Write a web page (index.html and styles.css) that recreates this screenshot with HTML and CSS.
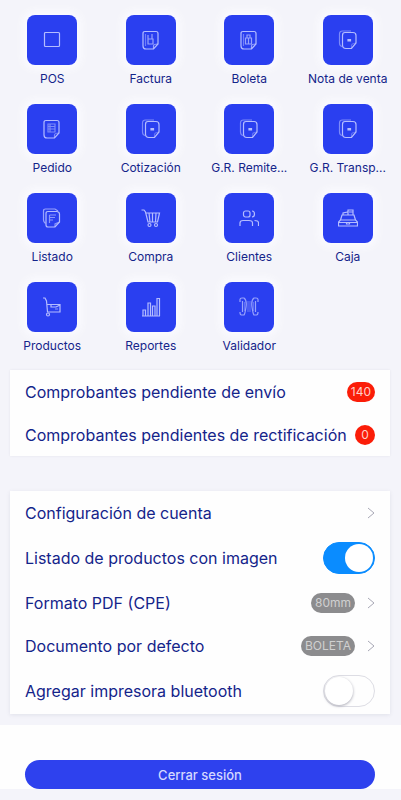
FILE: index.html
```html
<!DOCTYPE html>
<html lang="es">
<head>
<meta charset="utf-8">
<meta name="viewport" content="width=device-width, initial-scale=1">
<title>Menú</title>
<link rel="stylesheet" href="styles.css">
</head>
<body>
<svg class="symbols" aria-hidden="true">
  <symbol id="stack" viewBox="0 0 20 20">
    <path d="M4 16.500Q1.500 16 1.500 13V4Q1.500 1 4.500 1H13" opacity=".6"/>
    <path d="M7 2.500H15Q18 2.500 18 5.500V13L13.500 18.500H8Q4.500 18.500 4.500 15V5.500Q4.500 2.500 7 2.500Z"/>
    <path d="M13.500 18.500V15.500Q13.500 13.500 18 13" opacity=".4"/>
    <path d="M10 9.500H12.500V11H10Z" fill="currentColor"/>
  </symbol>
  <symbol id="chevron" viewBox="0 0 8 12"><path d="M1 1L7 6L1 11"/></symbol>
</svg>
<main>
  <nav class="apps" aria-label="Módulos">
    <a class="app" href="#"><span class="tile"><svg viewBox="0 0 20 20"><rect x="2.500" y="2.500" width="15" height="14" rx="1"/></svg></span>POS</a>
    <a class="app" href="#"><span class="tile"><svg viewBox="0 0 20 20"><path d="M4 1.500H15Q17 1.500 17 3.500V14L12.500 19H5Q2 19 2 16V3.500Q2 1.500 4 1.500Z"/><path d="M12.500 19V16Q12.500 14 17 14M7 5V14H12V9H7M11 4V9" opacity=".8"/><path d="M4.500 4V16" opacity=".5"/></svg></span>Factura</a>
    <a class="app" href="#"><span class="tile"><svg viewBox="0 0 20 20"><path d="M4 1.500H15Q17 1.500 17 3.500V14L12.500 19H5Q2 19 2 16V3.500Q2 1.500 4 1.500Z"/><path d="M12.500 19V16Q12.500 14 17 14M6.500 8H12.500V14H6.500ZM8 8V5H11V8M9.500 8V14" opacity=".8"/><path d="M4.500 4V16" opacity=".5"/></svg></span>Boleta</a>
    <a class="app" href="#"><span class="tile"><svg><use href="#stack"/></svg></span>Nota de venta</a>
    <a class="app" href="#"><span class="tile"><svg viewBox="0 0 20 20"><path d="M4 1.500H15Q17 1.500 17 3.500V14L12.500 19H5Q2 19 2 16V3.500Q2 1.500 4 1.500Z"/><path d="M12.500 19V16Q12.500 14 17 14M6 5H13V13H6ZM6 7.500H13M6 10H13M8 5V13" opacity=".6"/></svg></span>Pedido</a>
    <a class="app" href="#"><span class="tile"><svg><use href="#stack"/></svg></span>Cotización</a>
    <a class="app" href="#"><span class="tile"><svg><use href="#stack"/></svg></span>G.R. Remite...</a>
    <a class="app" href="#"><span class="tile"><svg><use href="#stack"/></svg></span>G.R. Transp...</a>
    <a class="app" href="#"><span class="tile"><svg viewBox="0 0 20 20"><path d="M3.500 15.500Q1.500 14 1.500 12V3Q1.500 1 3.500 1H13L16 3" opacity=".8"/><path d="M6 3.500H15Q17.500 4 17.500 6V14L13 19H6Q4 19 4 17V5.500Q4 3.500 6 3.500Z"/><path d="M13 19V16L17.500 14M7.500 7H14M7.500 9.500H13M7.500 12H11M7.500 7V15" opacity=".7"/></svg></span>Listado</a>
    <a class="app" href="#"><span class="tile"><svg viewBox="0 0 20 20"><path d="M.5 2H3L4.500 4L7 14H16.500L18.500 5H5M8 5L9 14M11.500 5V14M15 5L14.500 14"/><circle cx="8.500" cy="17" r="1.500"/><circle cx="15" cy="17" r="1.500"/></svg></span>Compra</a>
    <a class="app" href="#"><span class="tile"><svg viewBox="0 0 20 20"><rect x="4.500" y="3" width="6.500" height="6" rx="2"/><path d="M1 18V15Q1 12.500 4 12.500H10Q13.500 12.500 13.500 15V18M13 3Q15.500 3 15.500 6T13 9M15.500 12.500Q19.500 12.500 19.500 15V18"/></svg></span>Clientes</a>
    <a class="app" href="#"><span class="tile"><svg viewBox="0 0 20 20"><path d="M4 7H16L17.500 12H2.500ZM2.500 12L.5 14V18H19.500V14L17.500 12M1 14.500H19M5 7V5L10 4V7M10 4V2H15V7M11 4H15M8.500 14.500V16H11.500V14.500"/></svg></span>Caja</a>
    <a class="app" href="#"><span class="tile"><svg viewBox="0 0 20 20"><path d="M1 1H3L4.500 4L5.500 15H18V7.500H5M9 7.500V10H14L18 8"/><circle cx="6" cy="17.500" r="1.500"/><path d="M13 12H16" opacity=".6"/></svg></span>Productos</a>
    <a class="app" href="#"><span class="tile"><svg viewBox="0 0 20 20"><path d="M1 19H19M2 19V13H4.500V19M7 19V6H9.500V19M11.500 19V9H14V19M16 19V1.500H18.500V19"/></svg></span>Reportes</a>
    <a class="app" href="#"><span class="tile"><svg viewBox="0 0 20 20"><path d="M1 5V2.500Q1 1 3 1H5Q8 3 7 10T5 18H2.500Q1 18 1 15M19 5V2.500Q19 1 17 1H15Q12 3 13 10T15 18H17.500Q19 18 19 15M3.500 4V15M16.500 4V15" opacity=".8"/><path d="M5.500 5V14M9 4V15M11 4V15M14.500 5V14" opacity=".4"/></svg></span>Validador</a>
  </nav>

  <section class="card">
    <a class="row" href="#">Comprobantes pendiente de envío<span class="badge">140</span></a>
    <a class="row" href="#">Comprobantes pendientes de rectificación<span class="badge">0</span></a>
  </section>

  <section class="card settings">
    <a class="row" href="#">Configuración de cuenta<svg class="chevron"><use href="#chevron"/></svg></a>
    <label class="row tall">Listado de productos con imagen<input class="switch" type="checkbox" role="switch" checked></label>
    <a class="row" href="#">Formato PDF (CPE)<span class="badge muted">80mm</span><svg class="chevron"><use href="#chevron"/></svg></a>
    <a class="row" href="#">Documento por defecto<span class="badge muted">BOLETA</span><svg class="chevron"><use href="#chevron"/></svg></a>
    <label class="row tall">Agregar impresora bluetooth<input class="switch" type="checkbox" role="switch"></label>
  </section>
</main>
<footer>
  <button class="logout" type="button">Cerrar sesión</button>
</footer>
</body>
</html>
```
FILE: styles.css
```css
* {
  box-sizing: border-box;
}

body {
  margin: 0;
  background: #f4f4fa;
  color: #14248a;
  font-family: Inter, "Liberation Sans", sans-serif;
  font-size: 16px;
}

a {
  color: inherit;
  text-decoration: none;
}

svg {
  fill: none;
  stroke: currentColor;
}

.symbols {
  position: absolute;
  width: 0;
  height: 0;
}

.apps {
  display: grid;
  grid-template-columns: repeat(4, 1fr);
  row-gap: 17px;
  padding: 15px 4px 16px 3px;
}

.app {
  display: flex;
  flex-direction: column;
  align-items: center;
  gap: 6px;
  font-size: 12px;
  line-height: 16px;
  white-space: nowrap;
}

.tile {
  display: grid;
  place-items: center;
  width: 50px;
  height: 50px;
  border-radius: 8px;
  background: #2a3ff0;
  color: #b4bcff;
  box-shadow: 0 0 8px 4px #fbfbff;
}

.tile svg {
  width: 20px;
  height: 20px;
  stroke-width: 1.2;
}

.card {
  margin: 0 11px 0 10px;
  background: #fefefe;
  box-shadow: 0 0 2px #e4e4ec;
}

.settings {
  margin-top: 35px;
  box-shadow: 0 1px 4px #e0e1ea;
}

.row {
  display: flex;
  align-items: center;
  min-height: 43px;
  padding: 0 15px;
  line-height: 20px;
}

.tall {
  min-height: 47px;
}

.badge {
  min-width: 20px;
  margin-left: auto;
  padding: 0 4px;
  border-radius: 10px;
  background: #fb1d08;
  color: #ffd0c8;
  font-size: 12px;
  line-height: 20px;
  text-align: center;
}

.muted {
  background: #8c8c8e;
  color: #d0d0d0;
}

.chevron {
  width: 8px;
  height: 12px;
  margin-left: auto;
  color: #a8a8b6;
}

.muted + .chevron {
  margin-left: 12px;
}

.switch {
  appearance: none;
  display: flex;
  width: 52px;
  height: 32px;
  margin: 0 0 0 auto;
  padding: 1px;
  border: 1px solid #dddde4;
  border-radius: 16px;
  background: #fefefe;
}

.switch::before {
  content: "";
  width: 28px;
  height: 28px;
  border-radius: 50%;
  background: #fff;
  box-shadow: 0 1px 3px #a8a8b4;
}

.switch:checked {
  justify-content: flex-end;
  border-color: #0a8cff;
  background: #0a8cff;
}

.switch:checked::before {
  box-shadow: none;
}

footer {
  margin: 11px 0;
  padding: 35px 26px 0 25px;
  background: #fefefe;
}

.logout {
  display: block;
  width: 100%;
  height: 29px;
  padding: 0;
  border: 0;
  border-radius: 15px;
  background: #2e41ee;
  color: #d4d8ff;
  font: 500 13px/16px Inter, "Liberation Sans", sans-serif;
}
```
